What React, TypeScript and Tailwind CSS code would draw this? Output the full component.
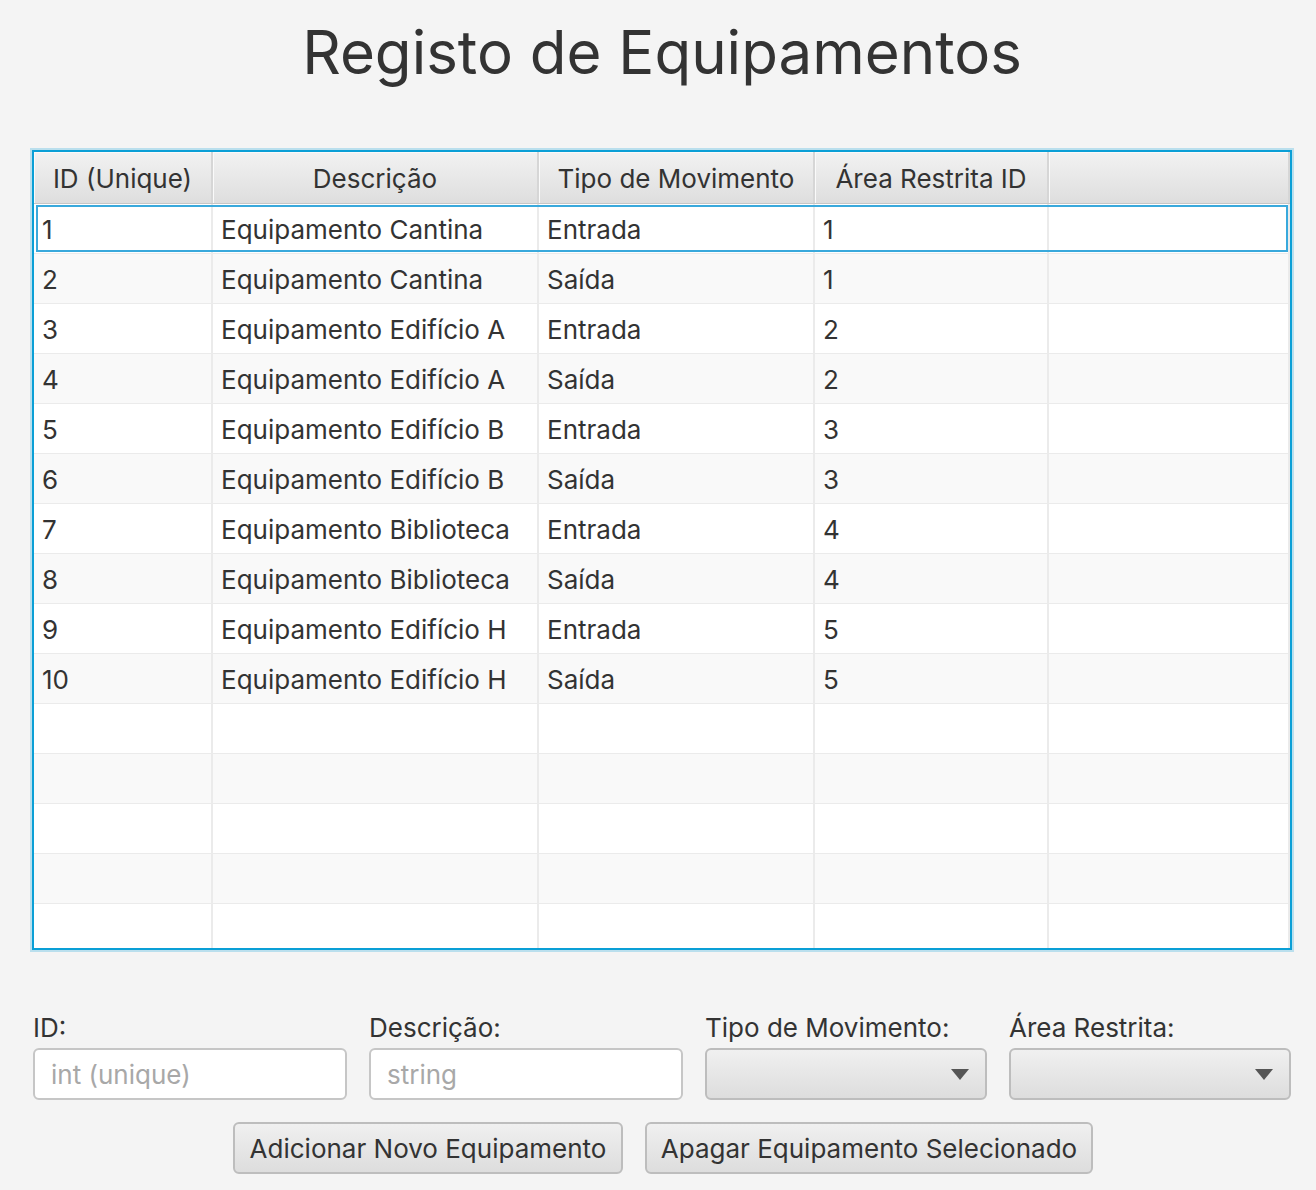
const rows = [
  ["1", "Equipamento Cantina", "Entrada", "1"],
  ["2", "Equipamento Cantina", "Saída", "1"],
  ["3", "Equipamento Edifício A", "Entrada", "2"],
  ["4", "Equipamento Edifício A", "Saída", "2"],
  ["5", "Equipamento Edifício B", "Entrada", "3"],
  ["6", "Equipamento Edifício B", "Saída", "3"],
  ["7", "Equipamento Biblioteca", "Entrada", "4"],
  ["8", "Equipamento Biblioteca", "Saída", "4"],
  ["9", "Equipamento Edifício H", "Entrada", "5"],
  ["10", "Equipamento Edifício H", "Saída", "5"],
  ["", "", "", ""],
  ["", "", "", ""],
  ["", "", "", ""],
  ["", "", "", ""],
  ["", "", "", ""],
];

const cols = "grid grid-cols-[179px_326px_276px_234px_1fr]";

const headers = ["ID (Unique)", "Descrição", "Tipo de Movimento", "Área Restrita ID", ""];

const Combo = () => (
  <div className="flex h-[52px] items-center justify-end rounded-[6px] border-2 border-[#bdbdbd] bg-gradient-to-b from-[#f0f0f0] to-[#dddddd] pr-[16px]">
    <svg width="18" height="11" viewBox="0 0 18 11">
      <polygon points="0,0 18,0 9,11" fill="#555" />
    </svg>
  </div>
);

export default function App() {
  return (
    <div
      className="h-[1190px] w-[1316px] overflow-hidden bg-[#f4f4f4] text-[#333]"
      style={{ fontFamily: "Inter, 'Noto Sans', sans-serif" }}
    >
      <h1 className="pl-[8px] pt-[14px] text-center text-[60px] leading-[76px] text-[#333]">
        Registo de Equipamentos
      </h1>

      <div className="ml-[32px] mt-[60px] h-[800px] w-[1260px] overflow-hidden border-2 border-[#0a9fd6] bg-white shadow-[0_0_0_2px_rgba(10,159,214,0.25)]">
        <div className={`${cols} h-[52px] border-b border-[#c6c6c6] bg-gradient-to-b from-[#f2f2f2] to-[#dedede]`}>
          {headers.map((h, i) => (
            <div
              key={i}
              className="flex items-center justify-center border-r-2 border-[#d6d6d6] pt-[2px] text-[26px] shadow-[inset_1px_1px_0_#fafafa]"
            >
              {h}
            </div>
          ))}
        </div>
        {rows.map((r, i) => (
          <div
            key={i}
            className={`relative ${cols} h-[50px] border-b border-[#ebebeb] ${i % 2 === 0 ? "bg-white" : "bg-[#f9f9f9]"}`}
          >
            {[...r, ""].map((c, j) => (
              <div key={j} className="flex items-center border-r-2 border-[#ebebeb] pl-[8px] pt-[2px] text-[26px]">
                {c}
              </div>
            ))}
            {i === 0 && (
              <div className="pointer-events-none absolute inset-x-[2px] inset-y-[1px] border-2 border-[#39a9dc]" />
            )}
          </div>
        ))}
      </div>

      <div className="ml-[33px] mt-[62px] grid grid-cols-[314px_314px_282px_282px] gap-x-[22px]">
        <div>
          <div className="mb-[4px] text-[26px] leading-[32px]">ID:</div>
          <div className="flex h-[52px] items-center rounded-[6px] border-2 border-[#c6c6c6] bg-white pl-[16px] text-[26px] text-[#a8a8a8]">
            int (unique)
          </div>
        </div>
        <div>
          <div className="mb-[4px] text-[26px] leading-[32px]">Descrição:</div>
          <div className="flex h-[52px] items-center rounded-[6px] border-2 border-[#c6c6c6] bg-white pl-[16px] text-[26px] text-[#a8a8a8]">
            string
          </div>
        </div>
        <div>
          <div className="mb-[4px] text-[26px] leading-[32px]">Tipo de Movimento:</div>
          <Combo />
        </div>
        <div>
          <div className="mb-[4px] text-[26px] leading-[32px]">Área Restrita:</div>
          <Combo />
        </div>
      </div>

      <div className="ml-[233px] mt-[22px] flex gap-[22px]">
        <button className="h-[52px] w-[390px] rounded-[6px] border-2 border-[#bdbdbd] bg-gradient-to-b from-[#f0f0f0] to-[#dddddd] text-[26px]">
          Adicionar Novo Equipamento
        </button>
        <button className="h-[52px] w-[448px] rounded-[6px] border-2 border-[#bdbdbd] bg-gradient-to-b from-[#f0f0f0] to-[#dddddd] text-[26px]">
          Apagar Equipamento Selecionado
        </button>
      </div>
    </div>
  );
}
